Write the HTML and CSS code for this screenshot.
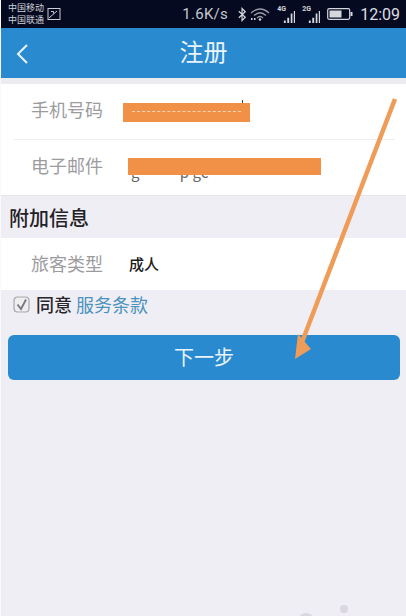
FILE: index.html
```html
<!DOCTYPE html>
<html lang="zh">
<head>
<meta charset="utf-8">
<title>注册</title>
<link rel="stylesheet" href="styles.css">
</head>
<body>
<div class="screen">
  <div class="status">
    <div class="carriers"><span>中国移动</span><span>中国联通</span></div>
    <svg class="pic" viewBox="0 0 14 14"><rect x="1" y="1.5" width="12" height="11" fill="none" stroke="#c9ccd4" stroke-width="1"/><path d="M2 11 L10 4 M4 4.5 h2.5 v2" fill="none" stroke="#c9ccd4" stroke-width="1"/></svg>
    <div class="status-right">
      <span class="speed">1.6K/s</span>
      <svg class="bt" viewBox="0 0 12 16"><path d="M2 4.5 L9 11 L5.5 14.5 V1.5 L9 5 L2 11.5" fill="none" stroke="#d5d7dd" stroke-width="1.3"/></svg>
      <svg class="wifi" viewBox="0 0 20 14"><path d="M1 6 Q10 -2 19 6 M4 8.5 Q10 3 16 8.5 M7 11 Q10 8 13 11" fill="none" stroke="#9a9ea8" stroke-width="1.2"/><circle cx="10" cy="12.5" r="1.2" fill="#d5d7dd"/><path d="M1 11h1.5v2H1zM4 11h1.5v2H4z" fill="#d5d7dd"/></svg>
      <span class="net"><small>4G</small><svg viewBox="0 0 14 14"><path d="M1 11h2.2v3H1zM5 8h2.2v6H5zM9 3h2v11H9zM12.6 0h1.4v14h-1.4z" fill="#d5d7dd"/></svg></span>
      <span class="net"><small>2G</small><svg viewBox="0 0 14 14"><path d="M1 11h2.2v3H1zM5 8h2.2v6H5zM9 3h2v11H9zM12.6 0h1.4v14h-1.4z" fill="#d5d7dd"/></svg></span>
      <svg class="batt" viewBox="0 0 26 12"><rect x="0.7" y="0.7" width="22" height="10.6" rx="1.5" fill="none" stroke="#d5d7dd" stroke-width="1.2"/><rect x="2.5" y="2.5" width="12" height="7" fill="#d5d7dd"/><rect x="23.5" y="4" width="2" height="4" fill="#d5d7dd"/></svg>
      <span class="clock">12:09</span>
    </div>
  </div>
  <header class="bar">
    <svg class="back" viewBox="0 0 14 22"><path d="M12 2 L3 11 L12 20" fill="none" stroke="#e8f4fc" stroke-width="2"/></svg>
    <h1>注册</h1>
  </header>
  <div class="strip"></div>
  <section class="card">
    <div class="row first"><span class="label">手机号码</span></div>
    <div class="row"><span class="label">电子邮件</span><span class="masked">g&nbsp;&nbsp;&nbsp;&nbsp;&nbsp;&nbsp;&nbsp;&nbsp;&nbsp;&nbsp;&nbsp;&nbsp;p&nbsp;gc</span></div>
  </section>
  <h2 class="section">附加信息</h2>
  <section class="card single">
    <div class="row type"><span class="label">旅客类型</span><span class="value">成人</span></div>
  </section>
  <div class="agree">
    <svg class="check" viewBox="0 0 17 17"><rect x="1" y="1" width="15" height="15" rx="3.5" fill="#eeeef1" stroke="#a8a8ac" stroke-width="1.2"/><path d="M4.5 8.5 L8 13 L13 3.5" fill="none" stroke="#77777c" stroke-width="1.8"/></svg>
    <span class="agree-text">同意</span>
    <a class="terms">服务条款</a>
  </div>
  <button class="next">下一步</button>

  <div class="redact one"><div class="dashes"></div></div>
  <div class="tick"></div>
  <div class="redact two"></div>
  <svg class="arrow" viewBox="0 0 406 616"><path d="M395 99 L299 350" fill="none" stroke="#ee9c58" stroke-width="4.5"/><path d="M295 359 L298 334 L311 349 Z" fill="#ee9c58"/></svg>
  <div class="smudge a"></div>
  <div class="smudge b"></div>
</div>
</body>
</html>
```
FILE: styles.css
```css
* { box-sizing: border-box; }
html, body { margin: 0; padding: 0; }
body { background: #f0eef5; font-family: "Noto Sans CJK SC", "Liberation Sans", sans-serif; }
.screen { position: relative; width: 406px; height: 616px; overflow: hidden; background: #f0eef5; border-left: 1px solid #fafafc; }

.status { height: 28px; background: #050a20; display: flex; align-items: center; padding: 0 6px 0 7px; color: #d5d7dd; }
.carriers { display: flex; flex-direction: column; font-size: 9px; line-height: 12px; width: 37px; color: #d0d2da; }
.pic { width: 14px; height: 14px; margin-left: 2px; }
.status-right { margin-left: auto; display: flex; align-items: center; }
.speed { font-family: "Roboto", sans-serif; font-size: 15px; letter-spacing: 0.3px; color: #c5c8d0; }
.bt { width: 11px; height: 15px; margin-left: 9px; }
.wifi { width: 20px; height: 14px; margin-left: 2px; }
.net { position: relative; display: block; width: 18px; height: 18px; margin-left: 7px; }
.net small { position: absolute; left: 0; top: 0; font-family: "Roboto", sans-serif; font-size: 7px; line-height: 8px; font-weight: 700; }
.net svg { position: absolute; right: 0; bottom: 0; width: 12px; height: 12px; }
.batt { width: 26px; height: 12px; margin-left: 7px; }
.clock { font-family: "Roboto", sans-serif; font-size: 16px; margin-left: 7px; color: #dcdee4; }

.bar { position: relative; height: 50px; background: #2a8ad0; display: flex; align-items: center; justify-content: center; padding-bottom: 5px; }
.bar h1 { margin: 0; font-size: 24px; font-weight: 400; color: #e9f4fb; }
.back { position: absolute; left: 14px; top: 15px; width: 14px; height: 22px; }
.strip { height: 6px; background: #ecebf0; }

.card { background: #fff; }
.row { position: relative; display: flex; align-items: center; height: 56px; margin: 0 11px 0 13px; padding: 0 0 6px 17px; border-top: 1px solid #eeeef0; }
.row.first { border-top: 0; height: 55px; }
.label { font-size: 18px; color: #9c9c9f; width: 98px; flex: none; }
.masked { font-size: 15px; color: #666; position: absolute; left: 117px; top: 21px; }

.section { margin: 0; height: 43px; display: flex; align-items: center; padding-left: 8px; font-size: 20px; font-weight: 500; color: #222226; background: #f0eef5; border-top: 1px solid #e6e6ea; }
.single { height: 52px; }
.row.type { border-top: 0; height: 52px; padding-bottom: 2px; }
.value { font-size: 15px; font-weight: 500; color: #1c1c1c; }

.agree { display: flex; align-items: center; height: 30px; padding: 0 0 2px 12px; }
.check { width: 17px; height: 17px; }
.agree-text { font-size: 18px; font-weight: 500; color: #26262a; margin-left: 6px; }
.terms { font-size: 18px; color: #4b92bd; margin-left: 4px; }

.next { display: block; width: 392px; height: 45px; margin: 15px 0 0 7px; border: 0; border-radius: 6px; background: #2a8ad0; color: #e9f4fb; font-family: inherit; font-size: 20px; padding: 0 0 3px; }

.redact { position: absolute; background: #f19148; }
.redact.one { left: 122px; top: 103px; width: 127px; height: 19px; padding: 8px 9px 0; }
.dashes { border-top: 1px dashed #f8d5b8; }
.tick { position: absolute; left: 241px; top: 100px; width: 1px; height: 3px; background: #444; }
.redact.two { left: 127px; top: 158px; width: 193px; height: 17px; }
.arrow { position: absolute; left: -1px; top: 0; width: 406px; height: 616px; pointer-events: none; }
.smudge { position: absolute; border-radius: 50%; background: #dcd6e0; }
.smudge.a { left: 339px; top: 605px; width: 8px; height: 8px; }
.smudge.b { left: 299px; top: 613px; width: 12px; height: 6px; }
```
